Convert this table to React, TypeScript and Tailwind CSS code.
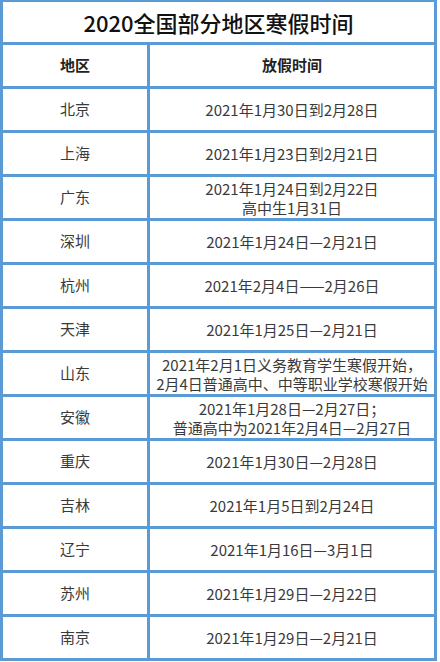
const rows: { city: string; lines: string[] }[] = [
  { city: '北京', lines: ['2021年1月30日到2月28日'] },
  { city: '上海', lines: ['2021年1月23日到2月21日'] },
  { city: '广东', lines: ['2021年1月24日到2月22日', '高中生1月31日'] },
  { city: '深圳', lines: ['2021年1月24日—2月21日'] },
  { city: '杭州', lines: ['2021年2月4日——2月26日'] },
  { city: '天津', lines: ['2021年1月25日—2月21日'] },
  {
    city: '山东',
    lines: ['2021年2月1日义务教育学生寒假开始，', '2月4日普通高中、中等职业学校寒假开始'],
  },
  {
    city: '安徽',
    lines: ['2021年1月28日—2月27日；', '普通高中为2021年2月4日—2月27日'],
  },
  { city: '重庆', lines: ['2021年1月30日—2月28日'] },
  { city: '吉林', lines: ['2021年1月5日到2月24日'] },
  { city: '辽宁', lines: ['2021年1月16日—3月1日'] },
  { city: '苏州', lines: ['2021年1月29日—2月22日'] },
  { city: '南京', lines: ['2021年1月29日—2月21日'] },
];

export default function App() {
  return (
    <div
      className="h-[662px] w-[440px] bg-white"
      style={{ fontFamily: '"Noto Sans CJK SC", "Liberation Sans", sans-serif' }}
    >
      <div className="w-[437px] border-x-[3px] border-t-2 border-b-[3px] border-[#5b9bd5]">
        {/* Title */}
        <div className="flex h-[43px] items-center justify-center border-b-[3px] border-[#5b9bd5] text-[22px] font-medium text-[#111]">
          2020全国部分地区寒假时间
        </div>

        {/* Header */}
        <div className="flex h-[44px] border-b-[3px] border-[#5b9bd5] text-[15px] font-bold text-[#222]">
          <div className="flex w-[147px] items-center justify-center border-r-[3px] border-[#5b9bd5]">
            地区
          </div>
          <div className="flex flex-1 items-center justify-center">放假时间</div>
        </div>

        {rows.map((r, i) => (
          <div
            key={r.city}
            className={`flex text-[15px] text-[#3a3a3a] ${
              i === rows.length - 1 ? 'h-[41px]' : 'h-[44px] border-b-[3px] border-[#5b9bd5]'
            }`}
          >
            <div className="flex w-[147px] items-center justify-center border-r-[3px] border-[#5b9bd5]">
              {r.city}
            </div>
            <div className="flex flex-1 flex-col items-center justify-center leading-[19px] whitespace-nowrap">
              {r.lines.map((l) => (
                <span key={l}>{l}</span>
              ))}
            </div>
          </div>
        ))}
      </div>
    </div>
  );
}
